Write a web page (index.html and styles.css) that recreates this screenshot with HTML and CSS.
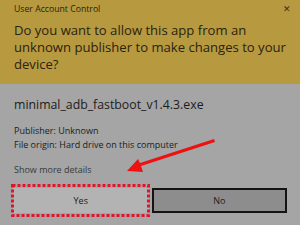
FILE: index.html
```html
<!DOCTYPE html>
<html>
<head>
<meta charset="utf-8">
<link rel="stylesheet" href="styles.css">
</head>
<body>
<div class="dialog">
  <div class="header">
    <div class="caption">User Account Control</div>
    <div class="close">&#x2715;</div>
    <div class="title">Do you want to allow this app from an unknown publisher to make changes to your device?</div>
  </div>
  <div class="body">
    <div class="file">minimal_adb_fastboot_v1.4.3.exe</div>
    <div class="meta">Publisher: Unknown</div>
    <div class="meta">File origin: Hard drive on this computer</div>
    <div class="more">Show more details</div>
    <div class="buttons">
      <div class="btn yes">Yes
        <svg class="dots" width="139" height="33" viewBox="0 0 139 33"><rect x="1.5" y="1.5" width="136" height="30" fill="none" stroke="#e2142c" stroke-width="3" stroke-dasharray="3 2"/></svg>
      </div>
      <div class="btn no">No</div>
    </div>
  </div>
  <svg class="arrow" width="300" height="225" viewBox="0 0 300 225">
    <polygon points="214,139 215,142 141,166 143,172 127,171 138,159 140,163" fill="#ee1111"/>
  </svg>
</div>
</body>
</html>
```
FILE: styles.css
```css
html, body { margin: 0; padding: 0; }
body { width: 300px; height: 225px; overflow: hidden; background: #a5a5a5; font-family: "Open Sans", "Noto Sans", sans-serif; color: #1c1c1c; }
.dialog { position: relative; width: 300px; height: 225px; }
.header { position: relative; background: #b7993f; padding: 4px 14px 11px 14px; height: 69px; }
.caption { font-size: 8.7px; line-height: 10px; color: #2b2411; }
.close { position: absolute; right: 9px; top: 3px; font-size: 9px; line-height: 12px; color: #3a3115; }
.title { margin-top: 8px; font-size: 13.1px; line-height: 17px; color: #2a2310; width: 280px; }
.body { padding: 13px 13px 0 14px; }
.file { font-size: 12.3px; line-height: 15px; }
.meta { font-size: 9px; line-height: 14px; }
.file + .meta { margin-top: 12px; }
.more { margin-top: 11px; font-size: 9px; line-height: 14px; color: #3a3a3a; }
.buttons { display: grid; grid-template-columns: 1fr 1fr; gap: 3px; margin: 11px 0 0 -1px; }
.btn { position: relative; height: 21px; border: 2px solid transparent; display: flex; align-items: center; justify-content: center; font-size: 9px; }
.yes { background: #b3b3b3; }
.no { background: #8d8d8d; border-color: #141414; }
.dots { position: absolute; left: -4px; top: -6px; }
.arrow { position: absolute; left: 0; top: 0; }
```
